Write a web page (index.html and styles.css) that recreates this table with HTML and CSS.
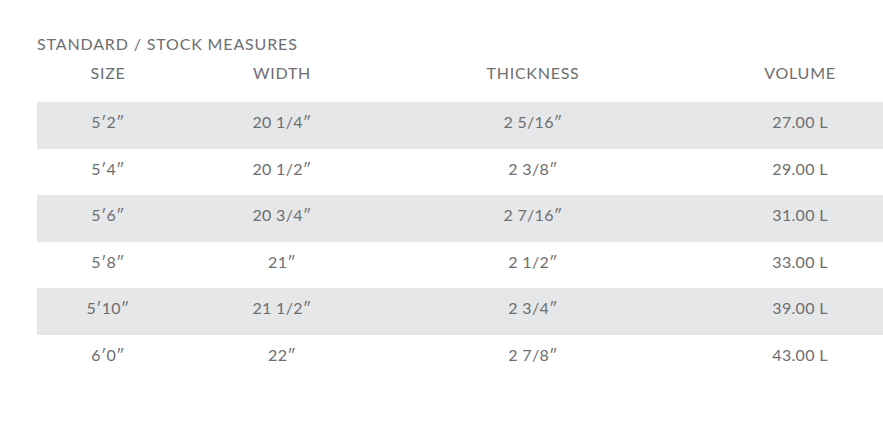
FILE: index.html
```html
<!DOCTYPE html>
<html>
<head>
<meta charset="utf-8">
<link rel="stylesheet" href="styles.css">
</head>
<body>
<div class="wrap">
  <h3 class="title">STANDARD / STOCK MEASURES</h3>
  <table class="measures">
    <colgroup>
      <col class="c1"><col class="c2"><col class="c3"><col class="c4">
    </colgroup>
    <thead>
      <tr><th>SIZE</th><th>WIDTH</th><th>THICKNESS</th><th>VOLUME</th></tr>
    </thead>
    <tbody>
      <tr><td>5′2″</td><td>20 1/4″</td><td>2 5/16″</td><td>27.00 L</td></tr>
      <tr><td>5′4″</td><td>20 1/2″</td><td>2 3/8″</td><td>29.00 L</td></tr>
      <tr><td>5′6″</td><td>20 3/4″</td><td>2 7/16″</td><td>31.00 L</td></tr>
      <tr><td>5′8″</td><td>21″</td><td>2 1/2″</td><td>33.00 L</td></tr>
      <tr><td>5′10″</td><td>21 1/2″</td><td>2 3/4″</td><td>39.00 L</td></tr>
      <tr><td>6′0″</td><td>22″</td><td>2 7/8″</td><td>43.00 L</td></tr>
    </tbody>
  </table>
</div>
</body>
</html>
```
FILE: styles.css
```css
html, body {
  margin: 0;
  padding: 0;
  background: #ffffff;
  overflow: hidden;
}
.wrap {
  padding: 34px 0 0 37px;
  font-family: "Lato", "Liberation Sans", sans-serif;
  color: #6d6e71;
}
.title {
  margin: 0;
  font-size: 16px;
  font-weight: 400;
  line-height: 20px;
  letter-spacing: 0.85px;
}
.measures {
  border-collapse: collapse;
  table-layout: fixed;
  width: 882px;
  margin-top: 0;
  font-size: 16px;
}
.c1 { width: 142px; }
.c2 { width: 206px; }
.c3 { width: 296px; }
.c4 { width: 238px; }
.measures th {
  font-weight: 400;
  height: 48px;
  padding: 0;
  text-align: center;
  vertical-align: top;
  padding-top: 9px;
  box-sizing: border-box;
  letter-spacing: 0.75px;
}
.measures td {
  height: 46.5px;
  padding: 0 0 7px 0;
  box-sizing: border-box;
  text-align: center;
  vertical-align: middle;
  letter-spacing: 0.3px;
}
.measures tbody tr:nth-child(odd) td {
  background: #e6e7e8;
}
```
